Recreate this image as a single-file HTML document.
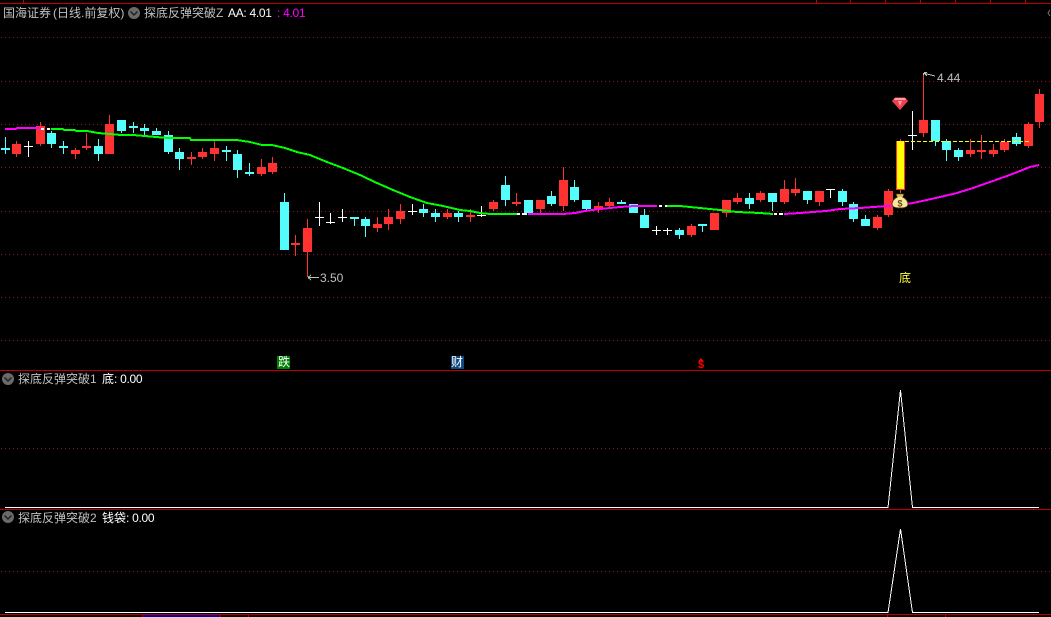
<!DOCTYPE html>
<html><head><meta charset="utf-8">
<style>
html,body{margin:0;padding:0;background:#000;width:1051px;height:617px;overflow:hidden}
svg{position:absolute;left:0;top:0}
.t{position:absolute;font:12px/14px "Liberation Sans","WenQuanYi Zen Hei","Noto Sans CJK SC",sans-serif;color:#c0c0c0;white-space:nowrap}
.n{letter-spacing:-.3px}
</style></head><body>
<svg width="1051" height="617" viewBox="0 0 1051 617">
<g stroke="#8c1414" stroke-width="1" stroke-dasharray="1 3" stroke-dashoffset="3" fill="none">
<path d="M0 37.500H1051M0 81.500H1051M0 124.500H1051M0 167.500H1051M0 211.500H1051M0 254.500H1051M0 297.500H1051M0 340.500H1051M0 448.500H1051M0 571.500H1051"/>
</g>
<path d="M0 3h1051v1H0zM23 0h1v3h-1zM816 0h1v3h-1zM850 0h1v3h-1zM885 0h1v3h-1zM920 0h1v3h-1zM955 0h1v3h-1zM990 0h1v3h-1zM1025 0h1v3h-1zM0 370h1051v1H0zM0 509h1051v1H0zM0 614h1051v1H0zM142 615h1v2h-1zM220 615h1v2h-1zM248 615h1v2h-1zM887 615h1v2h-1zM945 615h1v2h-1z" fill="#c00000"/>
<rect x="143" y="615" width="77" height="2" fill="#0000a0"/>
<g shape-rendering="crispEdges">
<g transform="translate(.5 0)" stroke-width="1" fill="none">
<path stroke="#ff3232" d="M16 141V157M40 122V146M75 148V159M86 133V150M109 115V154M191 152V165M202 148V159M214 141V161M261 159V176M272 157V174M295 235V256M307 219V277M377 217V232M388 209V230M400 204V224M447 209V219M470 209V222M493 200V211M516 193V206M540 200V213M563 167V211M598 202V213M609 198V209M691 224V237M714 213V230M726 200V217M737 193V204M760 191V202M784 180V204M795 178V196M819 191V206M877 215V230M888 189V217M900 139V193M923 75V137M970 139V157M981 135V159M993 144V157M1004 139V152M1028 122V148M1039 89V128"/>
<path stroke="#54fcfc" d="M5 137V154M51 131V148M63 141V154M98 139V161M121 120V133M133 122V133M144 124V135M156 128V135M168 131V154M179 148V170M226 146V161M237 150V178M249 163V176M284 193V250M354 217V226M365 217V237M423 204V217M435 209V222M458 211V222M505 176V206M528 200V213M551 191V206M574 180V202M586 200V211M621 200V204M633 204V213M644 209V228M679 228V239M702 224V232M749 193V209M772 193V211M807 191V204M842 189V206M853 202V222M865 215V226M935 120V146M946 139V161M958 148V161M1016 133V146"/>
<path stroke="#fff" d="M28 141V157M319 202V226M330 213V224M342 209V222M412 204V215M481 206V217M656 226V235M667 228V235M830 189V198M912 111V150"/>
</g>
<path fill="#ff3232" d="M12 144h9v10h-9zM36 126h9v18h-9zM71 150h9v4h-9zM82 146h9v2h-9zM105 124h9v30h-9zM187 157h9v2h-9zM198 152h9v5h-9zM210 148h9v6h-9zM257 167h9v7h-9zM268 163h9v9h-9zM291 243h9v2h-9zM303 228h9v24h-9zM373 224h9v4h-9zM384 217h9v7h-9zM396 211h9v8h-9zM443 213h9v4h-9zM466 215h9v2h-9zM489 202h9v7h-9zM512 202h9v2h-9zM536 200h9v9h-9zM559 180h9v26h-9zM594 206h9v3h-9zM605 202h9v4h-9zM687 226h9v9h-9zM710 213h9v17h-9zM722 200h9v13h-9zM733 198h9v4h-9zM756 193h9v7h-9zM780 189h9v13h-9zM791 189h9v4h-9zM815 191h9v11h-9zM873 217h9v11h-9zM884 191h9v24h-9zM919 120h9v13h-9zM966 150h9v4h-9zM977 150h9v2h-9zM989 150h9v4h-9zM1000 142h9v8h-9zM1024 124h9v22h-9zM1035 94h9v28h-9zM896 141h9v49h-9z"/>
<path fill="#ffff00" d="M897 141h7v48h-7z"/>
<path fill="#54fcfc" d="M1 148h9v2H1zM47 133h9v11h-9zM59 146h9v2h-9zM94 146h9v8h-9zM117 120h9v11h-9zM129 126h9v2h-9zM140 128h9v3h-9zM152 131h9v4h-9zM164 135h9v17h-9zM175 152h9v7h-9zM222 150h9v2h-9zM233 154h9v16h-9zM245 172h9v2h-9zM280 202h9v48h-9zM350 217h9v2h-9zM361 219h9v7h-9zM419 209h9v4h-9zM431 213h9v4h-9zM454 213h9v4h-9zM501 185h9v15h-9zM524 200h9v13h-9zM547 196h9v8h-9zM570 187h9v13h-9zM582 200h9v9h-9zM617 202h9v2h-9zM629 204h9v9h-9zM640 215h9v13h-9zM675 230h9v5h-9zM698 224h9v2h-9zM745 198h9v6h-9zM768 193h9v9h-9zM803 191h9v9h-9zM838 191h9v11h-9zM849 204h9v15h-9zM861 219h9v7h-9zM931 120h9v21h-9zM942 141h9v9h-9zM954 150h9v7h-9zM1012 137h9v7h-9z"/>
<path fill="#fff" d="M24 146h9v1h-9zM315 217h9v1h-9zM326 222h9v1h-9zM338 217h9v1h-9zM408 211h9v1h-9zM477 215h9v1h-9zM652 230h9v1h-9zM663 230h9v1h-9zM826 189h9v1h-9zM908 135h9v1h-9z"/>
<path d="M905 141.500H1030" stroke="#ffff00" stroke-width="1" stroke-dasharray="4 2" fill="none"/>
<g fill="none" stroke-width="2">
<polyline stroke="#ff00ff" points="5,129 16,129 17,128 40,128"/>
<polyline stroke="#00ff00" points="51,129 63,129 64,130 75,130 76,131 87,131 98,133 110,134 121,135 133,135 145,136 156,137 168,138 190,138 191,140 237,140 250,142 262,145 272,145 285,148 297,152 310,155 327,162 343,168 360,175 377,183 393,190 410,197 427,203 443,206 460,210 470,211 480,213 490,214 517,214"/>
<polyline stroke="#ff00ff" points="528,214 563,214 575,213 585,211 600,209 620,207 635,206 657,206"/>
<polyline stroke="#00ff00" points="667,206 680,206 690,207 700,208 720,210 737,212 760,213 773,214"/>
<polyline stroke="#ff00ff" points="784,214 800,213 813,212 826,211 840,209 860,208 887,206 900,205 913,203 927,200 940,197 957,193 973,188 990,182 1007,176 1020,171 1030,167 1039,165"/>
<path stroke="#fff" d="M41 129H44M47 129H50M517 214H520M522 214H527M659 206H662M665 206H667M774 214H777M779 214H783"/>
</g>
<g fill="none" stroke="#fff" stroke-width="1">
<polyline points="5,507.500 888,507.500 900.500,390 912.500,507.500 1039,507.500"/>
<polyline points="5,612.500 888,612.500 900.500,529 912.500,612.500 1039,612.500"/>
</g>
<g fill="none" stroke="#c0c0c0" stroke-width="1">
<path d="M923.500 73V75M924 72.500H927M924 73L927 76M925 73.500L935 76"/>
<path d="M308 277.500H319M308 277.500L311 275M308 277.500L311 280"/>
</g>
</g>
<path d="M895 97.500h10l3 3.500-8 9-8-9z" fill="#f04050"/>
<path d="M895 98h10l1 2h-12zM898 101h4l-2 5z" fill="#ffa0a8"/>
<path d="M896 194h8l-1.500 3c3.500 1.500 5.500 4.500 5.500 7 0 2.500-2.500 4-8 4s-8-1.500-8-4c0-2.500 2-5.500 5.500-7z" fill="#f8e6a0" stroke="#4a3410" stroke-width=".8"/>
<path d="M896.500 195h7l-1 2h-5z" fill="#e8c040"/>
<text x="900" y="206.500" font-family="Liberation Sans,sans-serif" font-size="9" font-weight="bold" text-anchor="middle" fill="#6a4a10">$</text>
<path d="M701 358l-2.500 3h5z" fill="#f00"/>
<rect x="277" y="356" width="13" height="13" fill="#008000"/>
<rect x="451" y="356" width="13" height="13" fill="#104880"/>
<circle cx="134" cy="13" r="6" fill="#6a6a6a"/>
<circle cx="8" cy="379" r="6" fill="#6a6a6a"/>
<circle cx="8" cy="517" r="6" fill="#6a6a6a"/>
<path d="M130.500 11.500L134 15l3.500-3.500M4.500 377.500L8 381l3.500-3.500M4.500 515.500L8 519l3.500-3.500" fill="none" stroke="#222" stroke-width="1.500"/>
<path d="M1050 10L1048 13l2 3" fill="none" stroke="#777" stroke-width="1"/>
</svg>
<div class="t" style="left:3px;top:6px">国海证券<span style="margin-left:2px">(日线.前复权)</span></div>
<div class="t" style="left:144px;top:6px">探底反弹突破Z</div>
<div class="t n" style="left:228px;top:6px;color:#fff">AA: 4.01</div>
<div class="t n" style="left:277px;top:6px;color:#ff00ff">: 4.01</div>
<div class="t" style="left:937px;top:71px">4.44</div>
<div class="t" style="left:320px;top:271px">3.50</div>
<div class="t" style="left:899px;top:271px;color:#ffff40">底</div>
<div class="t" style="left:278px;top:355px;color:#fff">跌</div>
<div class="t" style="left:451px;top:355px;color:#fff">财</div>
<div class="t" style="left:698px;top:358px;color:#f00;font-weight:bold;font-size:11px">$</div>
<div class="t" style="left:18px;top:372px">探底反弹突破1</div>
<div class="t" style="left:102px;top:372px;color:#fff">底<span class="n">: 0.00</span></div>
<div class="t" style="left:18px;top:511px">探底反弹突破2</div>
<div class="t" style="left:102px;top:511px;color:#fff">钱袋<span class="n">: 0.00</span></div>
</body></html>
